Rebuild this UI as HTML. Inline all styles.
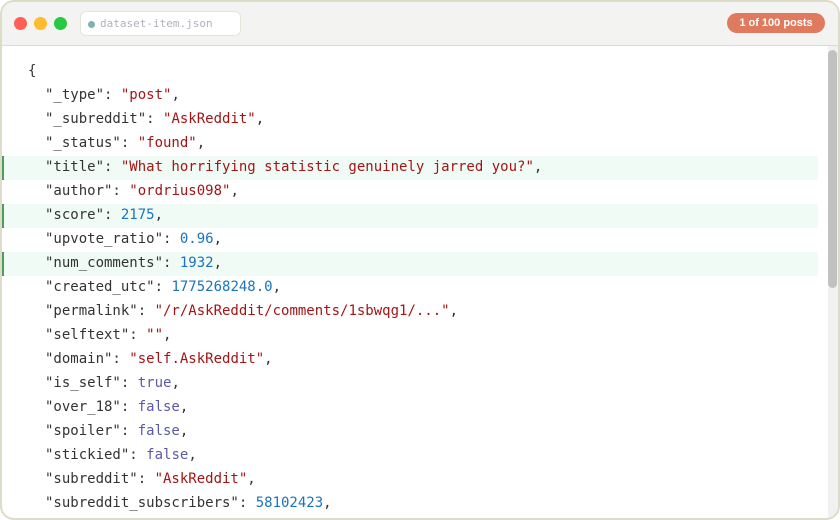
<!DOCTYPE html>
<html>
<head>
<meta charset="utf-8">
<style>
html,body{margin:0;padding:0;width:840px;height:520px;overflow:hidden;background:#fff}
.win{position:absolute;left:0;top:0;width:840px;height:520px;box-sizing:border-box;border:2px solid #dcdcc8;border-radius:14px;overflow:hidden;background:#fff}
.bar{position:absolute;left:0;top:0;width:836px;height:43px;background:#f3f3f1;border-bottom:1px solid #dcdcc8}
.dot{position:absolute;top:15px;width:13px;height:13px;border-radius:50%}
.url{position:absolute;left:78px;top:9px;width:161px;height:25px;box-sizing:border-box;background:#fff;border:1px solid #e4e4d8;border-radius:6px;font:11px/24px "DejaVu Sans Mono",monospace;color:#b0b0bc;padding-left:19px}
.url i{position:absolute;left:7px;top:8.5px;width:7px;height:7px;border-radius:50%;background:#7fb3ac}
.pill{position:absolute;left:725px;top:11px;width:98px;height:20px;border-radius:10px;background:#e07a5f;color:#fff;font:bold 11px/21px "Liberation Sans",sans-serif;text-align:center}
.code{position:absolute;left:0;top:58px;width:816px;font:14px/22px "DejaVu Sans Mono",monospace;color:#333}
.l{height:24px;padding-left:43px;white-space:pre;box-sizing:border-box}
.l.o{padding-left:26px}
.h{background:#effbf4;border-left:2px solid #4f9a63;padding-left:41px}
.s{color:#a31515}.n{color:#1a73c0}.b{color:#5a5aa8}
.track{position:absolute;left:826px;top:44px;width:10px;height:472px;background:#f1f1f1}
.thumb{position:absolute;left:0;top:4px;width:9px;height:238px;background:#c1c1c1;border-radius:4.5px}
</style>
</head>
<body>
<div class="win">
<div class="bar">
<div class="dot" style="left:12px;background:#ff5f57"></div>
<div class="dot" style="left:32px;background:#febc2e"></div>
<div class="dot" style="left:52px;background:#28c840"></div>
<div class="url"><i></i>dataset-item.json</div>
<div class="pill">1 of 100 posts</div>
</div>
<div class="code">
<div class="l o">{</div>
<div class="l">"_type": <span class="s">"post"</span>,</div>
<div class="l">"_subreddit": <span class="s">"AskReddit"</span>,</div>
<div class="l">"_status": <span class="s">"found"</span>,</div>
<div class="l h">"title": <span class="s">"What horrifying statistic genuinely jarred you?"</span>,</div>
<div class="l">"author": <span class="s">"ordrius098"</span>,</div>
<div class="l h">"score": <span class="n">2175</span>,</div>
<div class="l">"upvote_ratio": <span class="n">0.96</span>,</div>
<div class="l h">"num_comments": <span class="n">1932</span>,</div>
<div class="l">"created_utc": <span class="n">1775268248.0</span>,</div>
<div class="l">"permalink": <span class="s">"/r/AskReddit/comments/1sbwqg1/..."</span>,</div>
<div class="l">"selftext": <span class="s">""</span>,</div>
<div class="l">"domain": <span class="s">"self.AskReddit"</span>,</div>
<div class="l">"is_self": <span class="b">true</span>,</div>
<div class="l">"over_18": <span class="b">false</span>,</div>
<div class="l">"spoiler": <span class="b">false</span>,</div>
<div class="l">"stickied": <span class="b">false</span>,</div>
<div class="l">"subreddit": <span class="s">"AskReddit"</span>,</div>
<div class="l">"subreddit_subscribers": <span class="n">58102423</span>,</div>
</div>
<div class="track"><div class="thumb"></div></div>
</div>
</body>
</html>
